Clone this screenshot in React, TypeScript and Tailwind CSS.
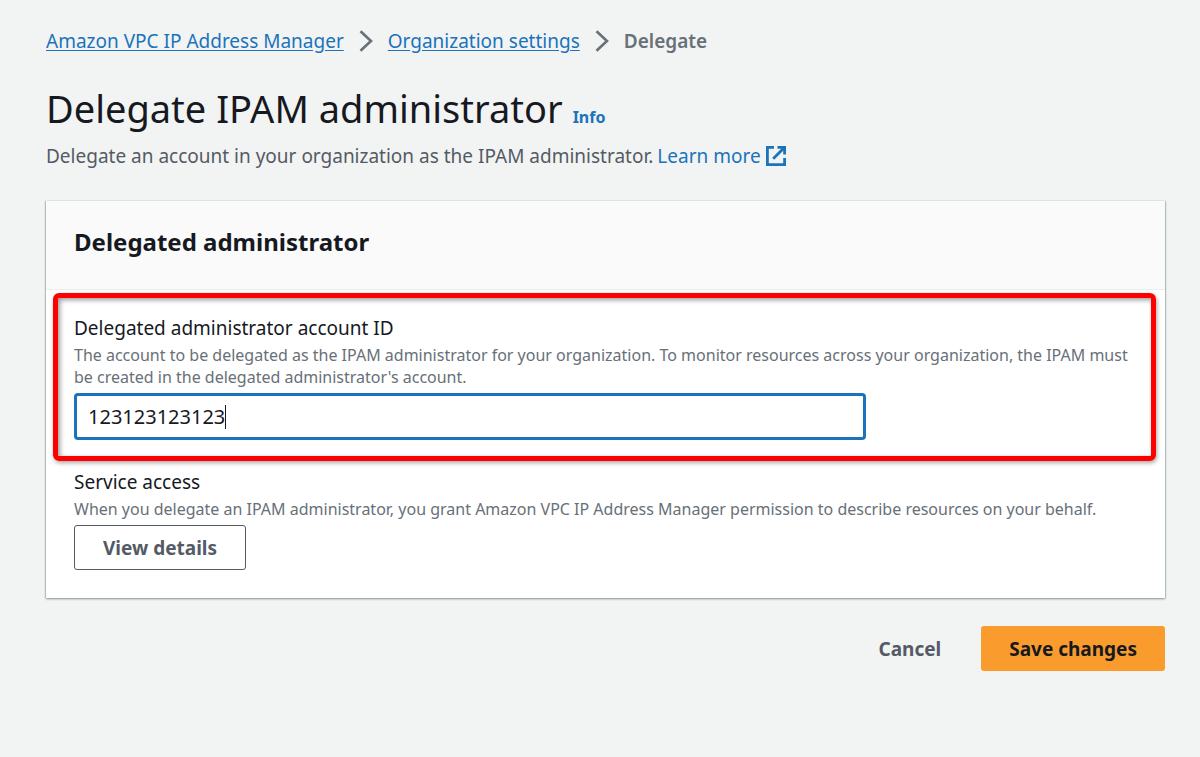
import { useState } from "react";
import type { ReactNode } from "react";

const linkColor = "text-[#1a73bb]";

const buttonBase =
  "h-[45px] rounded-[3px] px-7 text-[19px] leading-6 font-bold whitespace-nowrap cursor-pointer";

function Chevron() {
  return (
    <svg
      viewBox="0 0 14 22"
      className="w-[14px] h-[22px] shrink-0"
      fill="none"
      stroke="#687078"
      strokeWidth="2.6"
      aria-hidden="true"
    >
      <path d="M1.5 1.2 12 11 1.5 20.8" />
    </svg>
  );
}

function ExternalIcon() {
  return (
    <svg
      viewBox="0 0 20 20"
      className="w-5 h-5 shrink-0"
      fill="none"
      stroke="currentColor"
      strokeWidth="2.8"
      aria-hidden="true"
    >
      <path d="M8 1.4H1.4v17.2h17.2V12" />
      <path d="M11.5 1.4h7.1v7.1" />
      <path d="M18.2 1.8 7.2 12.8" />
    </svg>
  );
}

function Breadcrumbs() {
  const parents = ["Amazon VPC IP Address Manager", "Organization settings"];

  return (
    <nav aria-label="Breadcrumbs">
      <ol className="flex flex-wrap items-center gap-[15px] text-[19px] leading-7">
        {parents.map((label) => (
          <li key={label} className="flex items-center gap-[15px]">
            <a href="#" className={`${linkColor} underline underline-offset-2`}>
              {label}
            </a>
            <Chevron />
          </li>
        ))}
        <li className="font-semibold text-[#687078]" aria-current="page">
          Delegate
        </li>
      </ol>
    </nav>
  );
}

function Hint({ id, children }: { id?: string; children: ReactNode }) {
  return (
    <p id={id} className="mt-0.5 text-[16px] leading-[22px] text-[#687078]">
      {children}
    </p>
  );
}

export default function App() {
  const [accountId, setAccountId] = useState("123123123123");

  return (
    <main className="min-h-screen bg-[#f2f3f3] pl-[46px] pr-[35px] pt-[27px] pb-10 font-['Noto_Sans',sans-serif] text-[#16191f]">
      <Breadcrumbs />

      <header className="mt-[26px]">
        <div className="flex items-baseline gap-[10px]">
          <h1 className="text-[38px] leading-[54px]">
            Delegate IPAM administrator
          </h1>
          <a href="#" className={`${linkColor} text-[16px] font-bold`}>
            Info
          </a>
        </div>
        <p className="mt-[7px] flex items-center gap-1 text-[19px] leading-7 text-[#545b64]">
          Delegate an account in your organization as the IPAM administrator.
          <a href="#" className={`${linkColor} flex items-center gap-[5px]`}>
            Learn more <ExternalIcon />
          </a>
        </p>
      </header>

      <form onSubmit={(e) => e.preventDefault()}>
        <section className="mt-[31px] bg-white pb-7 shadow-[0_1px_2px_0_#879596,1px_0_1px_0_#c9d0d3,-1px_0_1px_0_#c9d0d3]">
          <div className="border-b border-[#eaeded] bg-[#fafafa] px-7 pt-6 pb-[30px]">
            <h2 className="text-[24px] leading-[34px] font-bold">
              Delegated administrator
            </h2>
          </div>

          <div className="ml-[7px] mr-[9px] mt-[3px] rounded-md border-[5px] border-[#ff0000] px-4 py-4 shadow-[1px_2px_4px_rgba(0,0,0,0.35),inset_2px_2px_5px_rgba(0,0,0,0.4)]">
            <label htmlFor="account" className="block text-[19px] leading-7">
              Delegated administrator account ID
            </label>
            <Hint id="account-hint">
              The account to be delegated as the IPAM administrator for your
              organization. To monitor resources across your organization, the
              IPAM must be created in the delegated administrator's account.
            </Hint>
            <div className="relative mt-[5px] w-full max-w-[792px] text-[20px]">
              <input
                id="account"
                type="text"
                autoFocus
                aria-describedby="account-hint"
                value={accountId}
                onChange={(e) => setAccountId(e.target.value)}
                className="block h-[47px] w-full rounded-[4px] border-[3px] border-[#1a73bb] bg-white px-[11px] caret-transparent outline-none"
              />
              {/* digits all share one width, so the caret can be placed in ch */}
              <span
                aria-hidden="true"
                className="absolute top-3 h-6 w-px bg-[#16191f]"
                style={{ left: `calc(14px + ${accountId.length}ch)` }}
              />
            </div>
          </div>

          <div className="px-7 pt-[7px]">
            <h3 className="text-[19px] leading-7">Service access</h3>
            <Hint>
              When you delegate an IPAM administrator, you grant Amazon VPC IP
              Address Manager permission to describe resources on your behalf.
            </Hint>
            <button
              type="button"
              className={`${buttonBase} mt-[5px] border border-[#545b64] bg-white text-[#545b64]`}
            >
              View details
            </button>
          </div>
        </section>

        <div className="mt-7 flex justify-end gap-3">
          <button type="button" className={`${buttonBase} text-[#545b64]`}>
            Cancel
          </button>
          <button
            type="submit"
            className={`${buttonBase} bg-[#fa9b2e] text-[#16191f]`}
          >
            Save changes
          </button>
        </div>
      </form>
    </main>
  );
}
